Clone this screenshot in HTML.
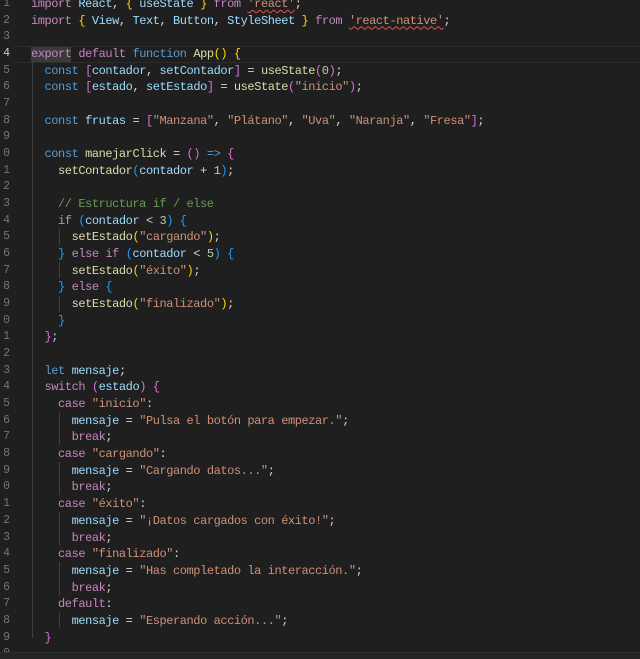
<!DOCTYPE html>
<html><head><meta charset="utf-8"><style>
html,body{margin:0;padding:0;background:#1f1f1f;width:640px;height:659px;overflow:hidden;position:relative}
.ed{position:absolute;left:0;top:-4px;width:640px}
.ln{position:absolute;left:0;width:10px;text-align:right;color:#6e7681;font:11.5px/16.67px "Liberation Mono",monospace;overflow:hidden}
pre{position:absolute;left:31px;top:0;margin:0;font:12px/16.67px "Liberation Mono",monospace;letter-spacing:-0.44px;color:#d4d4d4;white-space:pre}
.k{color:#c586c0}.b{color:#569cd6}.v{color:#9cdcfe}.f{color:#dcdcaa}.s{color:#ce9178}.n{color:#b5cea8}.c{color:#6a9955}
.g1{color:#ffd700}.g2{color:#da70d6}.g3{color:#179fff}
.sq{text-decoration:underline wavy #e05252;text-decoration-thickness:1px;text-underline-offset:2px}
.cur{position:absolute;left:13px;width:627px;top:45.7px;height:15px;border-top:1px solid #2c2c2c;border-bottom:1px solid #2c2c2c}
.hl{position:absolute;left:31px;top:46.5px;width:40px;height:15px;background:#3a3a3a}
.gd{position:absolute;width:1px;background:#404040}
.bot{position:absolute;left:0;top:652px;width:640px;height:7px;background:#242424;border-top:1px solid #2e2e2e}
</style></head><body>
<div class="cur"></div>
<div class="hl"></div>
<div class="gd" style="left:32px;top:62px;height:576px"></div>
<div class="gd" style="left:59px;top:229px;height:16px"></div>
<div class="gd" style="left:59px;top:262px;height:16px"></div>
<div class="gd" style="left:59px;top:296px;height:16px"></div>
<div class="gd" style="left:59px;top:412px;height:33px"></div>
<div class="gd" style="left:59px;top:462px;height:33px"></div>
<div class="gd" style="left:59px;top:512px;height:33px"></div>
<div class="gd" style="left:59px;top:562px;height:33px"></div>
<div class="gd" style="left:59px;top:612px;height:16px"></div>
<div class="ed">
<div class="ln">1<br>2<br>3<br><span style="color:#ccc">4</span><br>5<br>6<br>7<br>8<br>9<br>0<br>1<br>2<br>3<br>4<br>5<br>6<br>7<br>8<br>9<br>0<br>1<br>2<br>3<br>4<br>5<br>6<br>7<br>8<br>9<br>0<br>1<br>2<br>3<br>4<br>5<br>6<br>7<br>8<br>9<br>0</div>
<pre><span class="k">import</span> <span class="v">React</span>, <span class="g1">{</span> <span class="v">useState</span> <span class="g1">}</span> <span class="k">from</span> <span class="s sq">'react'</span>;
<span class="k">import</span> <span class="g1">{</span> <span class="v">View</span>, <span class="v">Text</span>, <span class="v">Button</span>, <span class="v">StyleSheet</span> <span class="g1">}</span> <span class="k">from</span> <span class="s sq">'react-native'</span>;

<span class="k">export</span> <span class="k">default</span> <span class="b">function</span> <span class="f">App</span><span class="g1">()</span> <span class="g1">{</span>
  <span class="b">const</span> <span class="g2">[</span><span class="v">contador</span>, <span class="v">setContador</span><span class="g2">]</span> = <span class="f">useState</span><span class="g2">(</span><span class="n">0</span><span class="g2">)</span>;
  <span class="b">const</span> <span class="g2">[</span><span class="v">estado</span>, <span class="v">setEstado</span><span class="g2">]</span> = <span class="f">useState</span><span class="g2">(</span><span class="s">"inicio"</span><span class="g2">)</span>;

  <span class="b">const</span> <span class="v">frutas</span> = <span class="g2">[</span><span class="s">"Manzana"</span>, <span class="s">"Plátano"</span>, <span class="s">"Uva"</span>, <span class="s">"Naranja"</span>, <span class="s">"Fresa"</span><span class="g2">]</span>;

  <span class="b">const</span> <span class="f">manejarClick</span> = <span class="g2">()</span> <span class="b">=&gt;</span> <span class="g2">{</span>
    <span class="f">setContador</span><span class="g3">(</span><span class="v">contador</span> + <span class="n">1</span><span class="g3">)</span>;

    <span class="c">// Estructura if / else</span>
    <span class="k">if</span> <span class="g3">(</span><span class="v">contador</span> &lt; <span class="n">3</span><span class="g3">)</span> <span class="g3">{</span>
      <span class="f">setEstado</span><span class="g1">(</span><span class="s">"cargando"</span><span class="g1">)</span>;
    <span class="g3">}</span> <span class="k">else</span> <span class="k">if</span> <span class="g3">(</span><span class="v">contador</span> &lt; <span class="n">5</span><span class="g3">)</span> <span class="g3">{</span>
      <span class="f">setEstado</span><span class="g1">(</span><span class="s">"éxito"</span><span class="g1">)</span>;
    <span class="g3">}</span> <span class="k">else</span> <span class="g3">{</span>
      <span class="f">setEstado</span><span class="g1">(</span><span class="s">"finalizado"</span><span class="g1">)</span>;
    <span class="g3">}</span>
  <span class="g2">}</span>;

  <span class="b">let</span> <span class="v">mensaje</span>;
  <span class="k">switch</span> <span class="g2">(</span><span class="v">estado</span><span class="g2">)</span> <span class="g2">{</span>
    <span class="k">case</span> <span class="s">"inicio"</span>:
      <span class="v">mensaje</span> = <span class="s">"Pulsa el botón para empezar."</span>;
      <span class="k">break</span>;
    <span class="k">case</span> <span class="s">"cargando"</span>:
      <span class="v">mensaje</span> = <span class="s">"Cargando datos..."</span>;
      <span class="k">break</span>;
    <span class="k">case</span> <span class="s">"éxito"</span>:
      <span class="v">mensaje</span> = <span class="s">"¡Datos cargados con éxito!"</span>;
      <span class="k">break</span>;
    <span class="k">case</span> <span class="s">"finalizado"</span>:
      <span class="v">mensaje</span> = <span class="s">"Has completado la interacción."</span>;
      <span class="k">break</span>;
    <span class="k">default</span>:
      <span class="v">mensaje</span> = <span class="s">"Esperando acción..."</span>;
  <span class="g2">}</span>
</pre>
</div>
<div class="bot"></div>
</body></html>
